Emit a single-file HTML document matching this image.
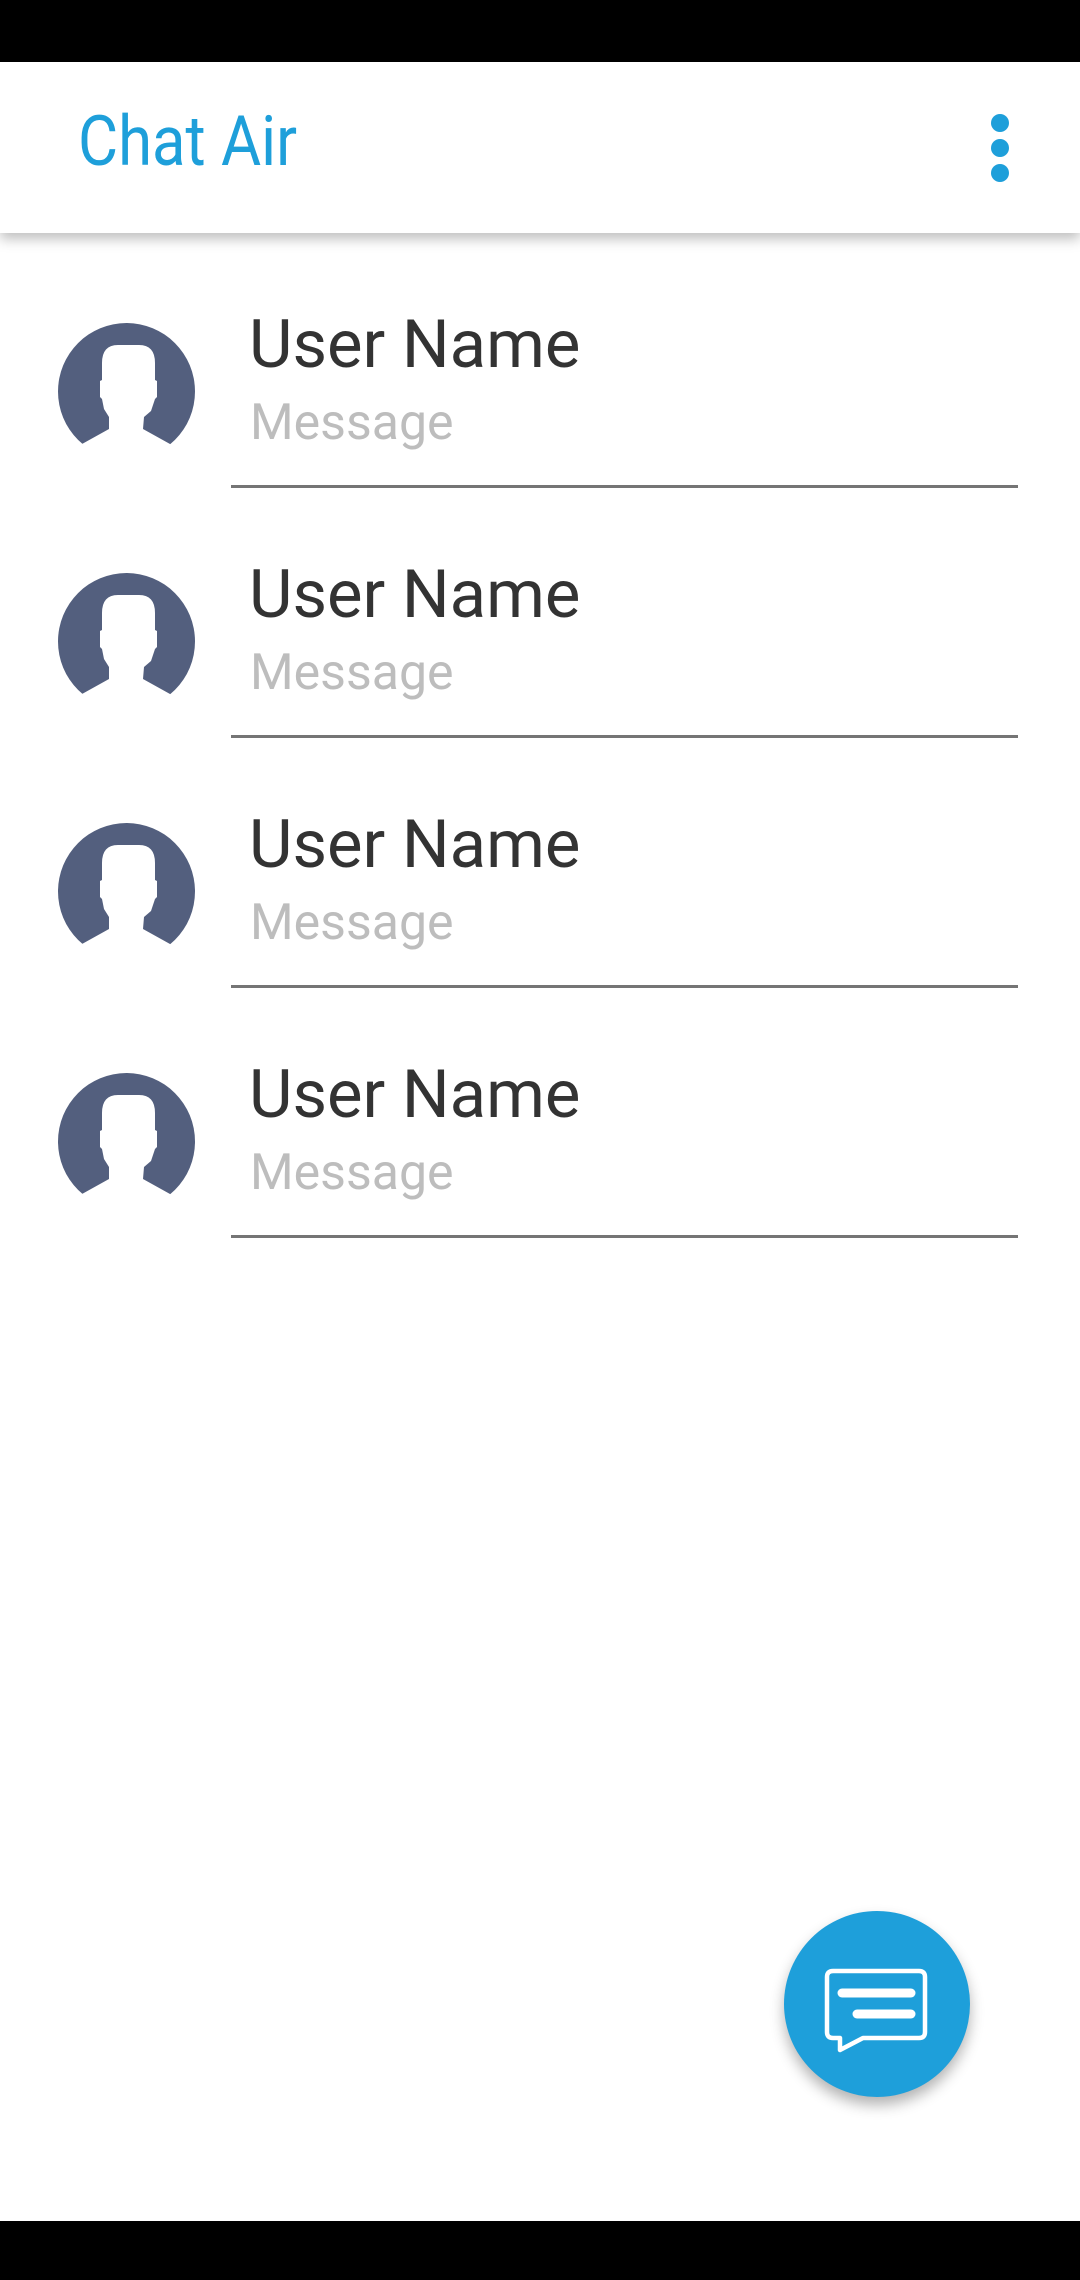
<!DOCTYPE html>
<html><head><meta charset="utf-8"><style>
*{margin:0;padding:0;box-sizing:border-box}
body{width:1080px;height:2280px;background:#fff;position:relative;overflow:hidden;font-family:"Roboto","Liberation Sans",sans-serif}
.sb{position:absolute;left:0;top:0;width:1080px;height:62px;background:#000}
.nb{position:absolute;left:0;top:2221px;width:1080px;height:59px;background:#000}
.tb{position:absolute;left:0;top:62px;width:1080px;height:171px;background:#fff;box-shadow:0 6px 12px rgba(0,0,0,.25);z-index:2}
.title{position:absolute;left:78px;top:45px;font-size:70px;color:#1e9fda;transform:scaleX(.88);transform-origin:left;line-height:1;white-space:nowrap}
.dot{position:absolute;left:991px;width:18px;height:18px;border-radius:50%;background:#1e9fda}
.row{position:absolute;left:0;width:1080px;height:250px}
.av{position:absolute;left:58px;top:0}
.un{position:absolute;left:249px;top:-11px;font-size:67px;color:#333;line-height:1;white-space:nowrap}
.ms{position:absolute;left:250px;top:75px;font-size:50px;color:#bdbdbd;line-height:1}
.dv{position:absolute;left:231px;top:162px;width:787px;height:3px;background:#757575}
.fab{position:absolute;left:784px;top:1911px;width:186px;height:186px;border-radius:50%;background:#1e9fda;box-shadow:0 8px 14px rgba(0,0,0,.3)}
</style></head><body>
<div class="sb"></div>
<div class="tb">
<div class="title">Chat Air</div>
<div class="dot" style="top:52px"></div>
<div class="dot" style="top:77px"></div>
<div class="dot" style="top:102px"></div>
</div>

<div class="row" style="top:323px">
<svg class="av" width="137" height="137" viewBox="0 0 137 137"><circle cx="68.5" cy="68.5" r="68.5" fill="#535f7e"/><path d="M44 40 Q44 22 60 22 L81 22 Q97 22 97 40 L97 57 L99 58 L99 74 L97 76 L93 88 L86 94 L85 106 L112 121 L140 140 L-5 140 L24 121 L51 106 L51 94 L46 86 L44 76 L42 74 L42 58 L44 57 Z" fill="#fff"/></svg>
<div class="un">User Name</div><div class="ms">Message</div><div class="dv"></div>
</div>
<div class="row" style="top:573px">
<svg class="av" width="137" height="137" viewBox="0 0 137 137"><circle cx="68.5" cy="68.5" r="68.5" fill="#535f7e"/><path d="M44 40 Q44 22 60 22 L81 22 Q97 22 97 40 L97 57 L99 58 L99 74 L97 76 L93 88 L86 94 L85 106 L112 121 L140 140 L-5 140 L24 121 L51 106 L51 94 L46 86 L44 76 L42 74 L42 58 L44 57 Z" fill="#fff"/></svg>
<div class="un">User Name</div><div class="ms">Message</div><div class="dv"></div>
</div>
<div class="row" style="top:823px">
<svg class="av" width="137" height="137" viewBox="0 0 137 137"><circle cx="68.5" cy="68.5" r="68.5" fill="#535f7e"/><path d="M44 40 Q44 22 60 22 L81 22 Q97 22 97 40 L97 57 L99 58 L99 74 L97 76 L93 88 L86 94 L85 106 L112 121 L140 140 L-5 140 L24 121 L51 106 L51 94 L46 86 L44 76 L42 74 L42 58 L44 57 Z" fill="#fff"/></svg>
<div class="un">User Name</div><div class="ms">Message</div><div class="dv"></div>
</div>
<div class="row" style="top:1073px">
<svg class="av" width="137" height="137" viewBox="0 0 137 137"><circle cx="68.5" cy="68.5" r="68.5" fill="#535f7e"/><path d="M44 40 Q44 22 60 22 L81 22 Q97 22 97 40 L97 57 L99 58 L99 74 L97 76 L93 88 L86 94 L85 106 L112 121 L140 140 L-5 140 L24 121 L51 106 L51 94 L46 86 L44 76 L42 74 L42 58 L44 57 Z" fill="#fff"/></svg>
<div class="un">User Name</div><div class="ms">Message</div><div class="dv"></div>
</div>

<div class="fab">
<svg width="186" height="186" viewBox="0 0 186 186" style="position:absolute;left:0;top:0">
<path d="M49 60 Q43 60 43 66 L43 121 Q43 127 49 127 L56 127 L56 139 L79 127 L135 127 Q141 127 141 121 L141 66 Q141 60 135 60 Z" fill="none" stroke="#fff" stroke-width="4.5" stroke-linejoin="round"/>
<line x1="58" y1="82" x2="127" y2="82" stroke="#fff" stroke-width="9" stroke-linecap="round"/>
<line x1="73" y1="103" x2="127" y2="103" stroke="#fff" stroke-width="9" stroke-linecap="round"/>
</svg>
</div>
<div class="nb"></div>
</body></html>
